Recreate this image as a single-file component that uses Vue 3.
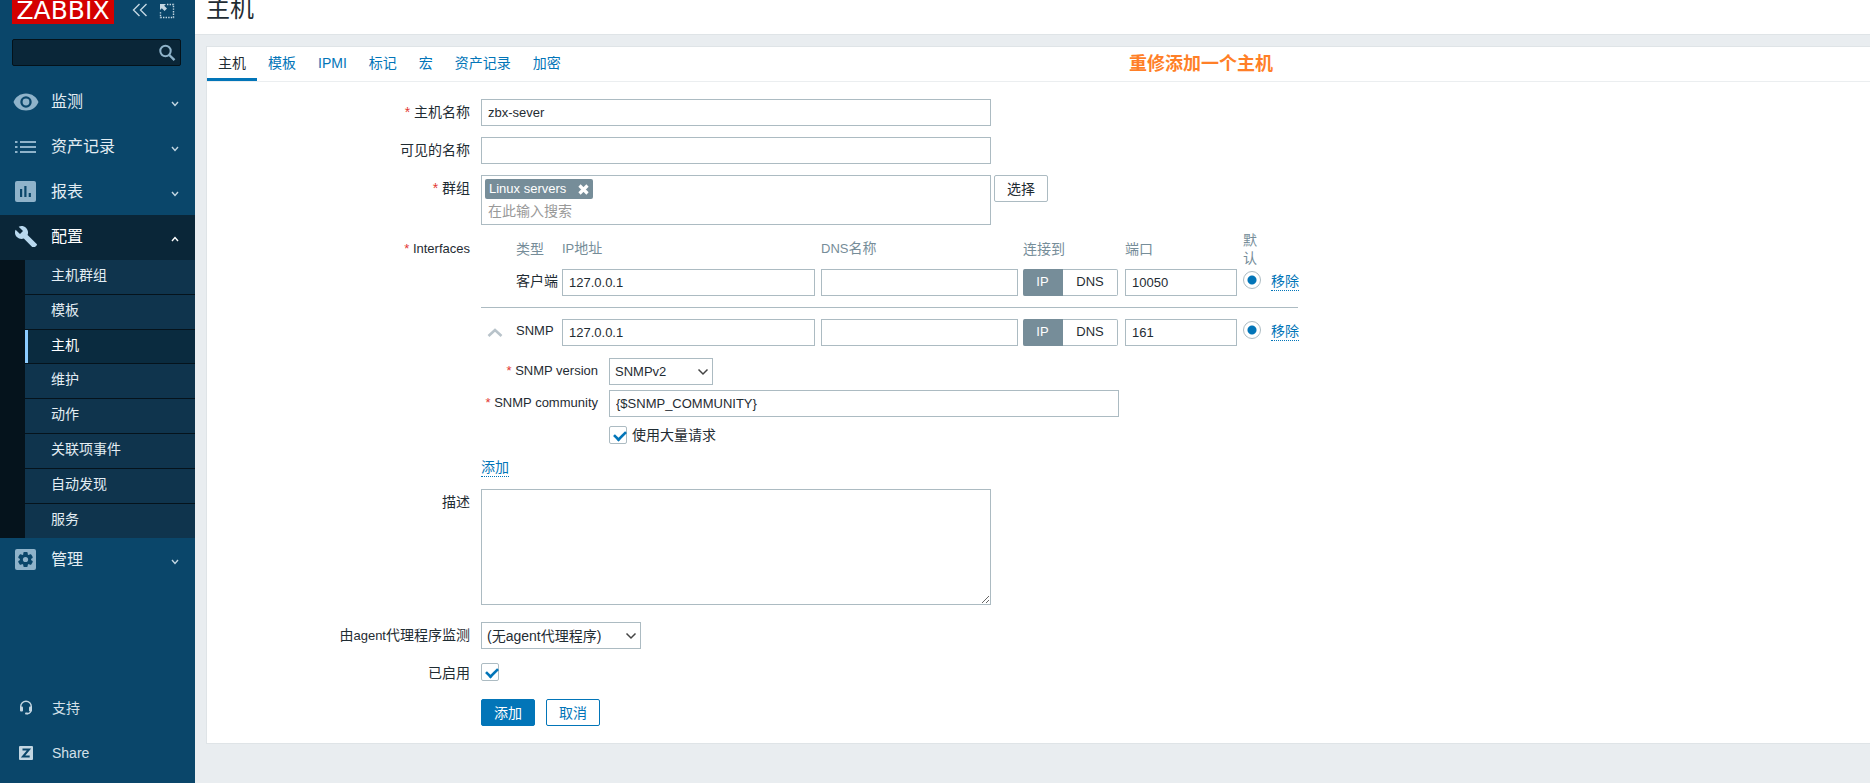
<script setup>
import { ref } from 'vue'

const menuTop = [
  { label: '监测', icon: 'eye' },
  { label: '资产记录', icon: 'list' },
  { label: '报表', icon: 'chart' }
]
const submenu = ['主机群组', '模板', '主机', '维护', '动作', '关联项事件', '自动发现', '服务']
const tabs = ['主机', '模板', 'IPMI', '标记', '宏', '资产记录', '加密']

const hostName = ref('zbx-sever')
const visibleName = ref('')
const interfaces = ref([
  { id: 'agent', type: '客户端', ip: '127.0.0.1', dns: '', port: '10050' },
  { id: 'snmp', type: 'SNMP', ip: '127.0.0.1', dns: '', port: '161' }
])
const community = ref('{$SNMP_COMMUNITY}')
const bulk = ref(true)
const enabled = ref(true)
const description = ref('')
</script>

<template>
  <div class="layout">
    <aside class="sidebar">
      <div class="brand">
        <a href="#" class="logo">ZABBIX</a>
        <button type="button" class="icon-btn compact" aria-label="收起">
          <svg width="16" height="14" viewBox="0 0 16 14"><path d="M7.5 1 1.5 7l6 6M14.5 1l-6 6 6 6" fill="none" stroke="#c3d6e2" stroke-width="1.4" /></svg>
        </button>
        <button type="button" class="icon-btn" aria-label="隐藏">
          <svg width="16" height="16" viewBox="0 0 16 16">
            <path d="M8 1.5h6.500v13h-13V8" fill="none" stroke="#c3d6e2" stroke-width="1.4" stroke-dasharray="1.4 1.2" />
            <path d="M1 1h6L5.200 2.800 8 5.600 5.600 8 2.800 5.200 1 7z" fill="#c3d6e2" />
          </svg>
        </button>
      </div>
      <form class="search" @submit.prevent>
        <input type="text" aria-label="搜索" />
        <button type="submit" class="icon-btn" aria-label="搜索">
          <svg width="18" height="18" viewBox="0 0 18 18"><circle cx="7.500" cy="7" r="5.200" fill="none" stroke="#8fb3ca" stroke-width="2" /><path d="m11.300 11 5.200 5.200" stroke="#8fb3ca" stroke-width="2.400" /></svg>
        </button>
      </form>
      <nav>
        <a v-for="m in menuTop" :key="m.label" href="#" class="menu-item">
          <span class="menu-icon">
            <svg v-if="m.icon === 'eye'" width="26" height="18" viewBox="0 0 26 18"><path fill-rule="evenodd" fill="#8fb3ca" d="M13 .5C7 .5 2.500 4 .5 9c2 5 6.500 8.500 12.500 8.500S23.500 14 25.500 9C23.500 4 19 .5 13 .5zm0 14.200a5.700 5.700 0 1 1 0-11.400 5.700 5.700 0 0 1 0 11.400z" /><circle cx="13" cy="9" r="3.400" fill="#8fb3ca" /></svg>
            <svg v-else-if="m.icon === 'list'" width="22" height="12" viewBox="0 0 22 12"><path fill="#8fb3ca" d="M0 0h2.500v2H0zM5 0h16v2H5zM0 5h2.500v2H0zM5 5h16v2H5zM0 10h2.500v2H0zM5 10h16v2H5z" /></svg>
            <svg v-else width="21" height="21" viewBox="0 0 21 21"><rect width="21" height="21" rx="2" fill="#8fb3ca" /><path fill="#0a466a" d="M5 8h2.200v8H5zM9.300 5h2.200v11H9.300zM13.700 12h2.200v4h-2.200z" /></svg>
          </span>
          <span>{{ m.label }}</span>
          <svg class="caret" width="8" height="6" viewBox="0 0 8 6"><path d="m1 1 3 3.500L7 1" fill="none" stroke="#c3d6e2" stroke-width="1.400" /></svg>
        </a>
        <a href="#" class="menu-item open">
          <span class="menu-icon">
            <svg width="22" height="21" viewBox="1 1.500 22 20"><path fill="#b8d8ee" d="M22.700 19l-9.100-9.100c.9-2.300.4-5-1.500-6.900-2-2-5-2.400-7.400-1.300L9 6 6 9 1.600 4.700C.4 7.100.9 10.100 2.900 12.100c1.900 1.900 4.600 2.400 6.900 1.500l9.100 9.100c.4.4 1 .4 1.400 0l2.300-2.300c.5-.4.5-1.100.1-1.400z" /></svg>
          </span>
          <span>配置</span>
          <svg class="caret" width="8" height="6" viewBox="0 0 8 6"><path d="m1 5 3-3.500L7 5" fill="none" stroke="#fff" stroke-width="1.400" /></svg>
        </a>
        <ul class="submenu">
          <li v-for="s in submenu" :key="s"><a href="#" :class="{ current: s === '主机' }">{{ s }}</a></li>
        </ul>
        <a href="#" class="menu-item">
          <span class="menu-icon">
            <svg width="21" height="21" viewBox="0 0 21 21">
              <rect width="21" height="21" rx="2" fill="#8fb3ca" />
              <g fill="#0a466a"><circle cx="10.500" cy="10.500" r="5.600" /><rect v-for="a in [0, 60, 120]" :key="a" x="8.300" y="3" width="4.400" height="15" rx="1" :transform="`rotate(${a} 10.500 10.500)`" /></g>
              <circle cx="10.500" cy="10.500" r="2.600" fill="#8fb3ca" />
            </svg>
          </span>
          <span>管理</span>
          <svg class="caret" width="8" height="6" viewBox="0 0 8 6"><path d="m1 1 3 3.500L7 1" fill="none" stroke="#c3d6e2" stroke-width="1.400" /></svg>
        </a>
      </nav>
      <nav class="bottom-nav">
        <a href="#" class="menu-item small">
          <span class="menu-icon">
            <svg width="14" height="15" viewBox="0 0 14 15"><path d="M1.700 9V6.500a5.300 5.300 0 0 1 10.600 0V9c0 3-1.500 4.500-4.300 4.800" fill="none" stroke="#c3d6e2" stroke-width="1.400" /><rect x="1" y="6.500" width="3" height="5" rx="1" fill="#c3d6e2" /><rect x="10" y="6.500" width="3" height="5" rx="1" fill="#c3d6e2" /><rect x="6" y="12.500" width="3" height="2" rx="1" fill="#c3d6e2" /></svg>
          </span>
          <span>支持</span>
        </a>
        <a href="#" class="menu-item small">
          <span class="menu-icon">
            <svg width="14" height="14" viewBox="0 0 14 14"><rect width="14" height="14" rx="1" fill="#c3d6e2" /><path d="M3.500 3.500h6.500L4 10.500h6.700" fill="none" stroke="#0a466a" stroke-width="2" /></svg>
          </span>
          <span>Share</span>
        </a>
      </nav>
    </aside>

    <div class="page">
      <header class="page-head"><h1>主机</h1></header>
      <main class="card">
        <nav class="tabs">
          <a v-for="(t, i) in tabs" :key="t" href="#" :class="{ active: i === 0 }">{{ t }}</a>
        </nav>
        <strong class="note">重修添加一个主机</strong>

        <form class="form" @submit.prevent>
          <label class="label req" for="host">主机名称</label>
          <div class="field"><input id="host" v-model="hostName" class="box wide" type="text" /></div>

          <label class="label" for="visible">可见的名称</label>
          <div class="field"><input id="visible" v-model="visibleName" class="box wide" type="text" /></div>

          <label class="label req" for="groups">群组</label>
          <div class="field groups">
            <div class="multi wide">
              <span class="tag">Linux servers
                <button type="button" class="icon-btn" aria-label="移除 Linux servers"><svg width="11" height="11" viewBox="0 0 11 11"><path d="m1.500 1.500 8 8m0-8-8 8" stroke="#fff" stroke-width="3.200" /></svg></button>
              </span>
              <input id="groups" type="text" placeholder="在此输入搜索" />
            </div>
            <button type="button" class="btn plain">选择</button>
          </div>

          <span class="label req iface-label lat">Interfaces</span>
          <div class="field iface">
            <table>
              <colgroup>
                <col class="c-toggle" /><col class="c-type" /><col class="c-ip" /><col class="c-dns" /><col class="c-conn" /><col class="c-port" /><col class="c-def" /><col class="c-act" />
              </colgroup>
              <thead>
                <tr><th></th><th>类型</th><th><span class="lat">IP</span>地址</th><th><span class="lat">DNS</span>名称</th><th>连接到</th><th>端口</th><th><span class="default-head">默认</span></th><th></th></tr>
              </thead>
              <tbody>
                <tr v-for="(r, i) in interfaces" :key="r.id" :class="{ ruled: i > 0 }">
                  <td class="fold">
                    <button v-if="i > 0" type="button" class="icon-btn" aria-label="折叠"><svg width="16" height="9" viewBox="0 0 16 9"><path d="m1.500 8 6.500-6 6.500 6" fill="none" stroke="#b8c3ca" stroke-width="2.600" /></svg></button>
                  </td>
                  <td><span class="type" :class="{ lat: i > 0 }">{{ r.type }}</span></td>
                  <td><input v-model="r.ip" class="box ip" type="text" aria-label="IP地址" /></td>
                  <td><input v-model="r.dns" class="box dns" type="text" aria-label="DNS名称" /></td>
                  <td>
                    <div class="switch"><button type="button" class="on">IP</button><button type="button">DNS</button></div>
                  </td>
                  <td><input v-model="r.port" class="box port" type="text" aria-label="端口" /></td>
                  <td><input class="radio" type="radio" :name="r.id" aria-label="默认" checked /></td>
                  <td><a href="#" class="link">移除</a></td>
                </tr>
                <tr>
                  <td colspan="8" class="details-cell">
                    <div class="details">
                      <label class="label req lat" for="ver">SNMP version</label>
                      <div class="select ver">
                        <select id="ver"><option>SNMPv2</option></select>
                        <svg width="12" height="8" viewBox="0 0 12 8"><path d="m1.500 1.500 4.500 4.500 4.500-4.500" fill="none" stroke="#444" stroke-width="1.500" /></svg>
                      </div>
                      <label class="label req lat" for="comm">SNMP community</label>
                      <input id="comm" v-model="community" class="box wide" type="text" />
                      <span></span>
                      <label class="check"><input v-model="bulk" class="checkbox" type="checkbox" /><span>使用大量请求</span></label>
                    </div>
                  </td>
                </tr>
              </tbody>
            </table>
            <a href="#" class="link add">添加</a>
          </div>

          <label class="label" for="desc">描述</label>
          <div class="field desc"><textarea id="desc" v-model="description" class="wide"></textarea></div>

          <label class="label" for="proxy">由<span class="lat">agent</span>代理程序监测</label>
          <div class="field proxy">
            <div class="select">
              <select id="proxy"><option>(无agent代理程序)</option></select>
              <svg width="12" height="8" viewBox="0 0 12 8"><path d="m1.500 1.500 4.500 4.500 4.500-4.500" fill="none" stroke="#444" stroke-width="1.500" /></svg>
            </div>
          </div>

          <label class="label" for="enabled">已启用</label>
          <div class="field enabled"><input id="enabled" v-model="enabled" class="checkbox" type="checkbox" /></div>

          <div class="actions">
            <button type="submit" class="btn primary">添加</button>
            <button type="button" class="btn outline">取消</button>
          </div>
        </form>
      </main>
    </div>
  </div>
</template>

<style>
body {
  background: #e9edf0;
}
</style>

<style scoped>
.layout,
.layout * {
  box-sizing: border-box;
}
.layout {
  display: flex;
  min-height: 100vh;
  font-family: "Liberation Sans", "Noto Sans CJK SC", sans-serif;
  font-size: 14px;
  line-height: 18px;
  color: #1f2c33;
}
.layout input,
.layout select,
.layout textarea,
.layout button {
  font-family: inherit;
  font-size: 14px;
  color: inherit;
  margin: 0;
}
a {
  text-decoration: none;
}
svg {
  display: block;
}
.icon-btn {
  display: inline-flex;
  padding: 0;
  border: 0;
  background: none;
}
.layout .lat {
  font-size: 13px;
}

/* sidebar */
.sidebar {
  flex: none;
  display: flex;
  flex-direction: column;
  width: 195px;
  padding-bottom: 8px;
  background: #0a466a;
}
.brand {
  display: flex;
  align-items: flex-start;
  height: 39px;
  padding-left: 12px;
}
.layout .brand .icon-btn {
  margin: 3px 0 0 11px;
}
.layout .brand .icon-btn.compact {
  margin-left: 18px;
}
.logo {
  width: 102px;
  height: 24px;
  background: #d40000;
  color: #fff;
  font: 25px/22px "DejaVu Sans", sans-serif;
  text-align: center;
}
.search {
  display: flex;
  align-items: center;
  margin: 0 14px 14px 12px;
  height: 27px;
  padding-right: 4px;
  border: 1px solid #04121a;
  border-radius: 2px;
  background: #0a2638;
}
.search input {
  flex: 1;
  min-width: 0;
  border: 0;
  background: none;
}
.menu-item {
  display: flex;
  align-items: center;
  height: 45px;
  padding: 0 16px 2px 0;
  color: #e3edf3;
  font-size: 16px;
}
.menu-item.open {
  background: #0a2638;
  color: #fff;
}
.menu-icon {
  display: flex;
  justify-content: center;
  width: 51px;
}
.caret {
  margin: 4px 0 0 auto;
}
.submenu {
  margin: 0;
  padding: 0 0 0 25px;
  list-style: none;
  background: #05131c;
}
.submenu a {
  display: block;
  height: 34px;
  padding: 6px 0 0 26px;
  background: #0f344d;
  color: #e3edf3;
}
.submenu li + li {
  border-top: 1px solid #05131c;
}
.submenu a.current {
  height: 33px;
  padding-left: 23px;
  border-left: 3px solid #8bcbff;
  background: #0a2b3f;
  box-shadow: 0 -1px #05131c;
  color: #fff;
}
.bottom-nav {
  margin-top: auto;
}
.menu-item.small {
  gap: 1px;
  padding-bottom: 0;
  color: #d3e0e9;
  font-size: 14px;
}

/* page */
.page {
  flex: 1;
  min-width: 0;
}
.page-head {
  height: 35px;
  padding-left: 11px;
  border-bottom: 1px solid #dfe4e7;
  background: #fff;
}
h1 {
  margin: 0;
  font-size: 24px;
  line-height: 17px;
  font-weight: 400;
}
.card {
  position: relative;
  margin: 11px 0 0 11px;
  border: 1px solid #dfe4e7;
  border-right: 0;
  background: #fff;
}
.tabs {
  display: flex;
  height: 35px;
  border-bottom: 1px solid #ebeef0;
}
.tabs a {
  padding: 7px 11px 0;
  height: 34px;
  color: #0275b8;
}
.tabs a.active {
  border-bottom: 3px solid #0275b8;
  color: #1f2c33;
}
.note {
  position: absolute;
  left: 922px;
  top: 8px;
  font-size: 18px;
  color: #ff7f27;
}

/* form */
.form {
  display: grid;
  grid-template-columns: 263px minmax(0, 1fr);
  column-gap: 11px;
  row-gap: 11px;
  padding: 17px 0;
}
.label {
  padding-top: 4px;
  text-align: right;
}
.req::before {
  content: "* ";
  color: #e33734;
}
.box,
.multi,
.select select,
textarea {
  border: 1px solid #acbbc2;
  border-radius: 0;
  background: #fff;
}
.box {
  display: block;
  height: 27px;
  padding: 0 6px;
}
.layout .box {
  font-size: 13px;
}
.wide {
  width: 510px;
}
.groups {
  display: flex;
  align-items: flex-start;
  gap: 3px;
}
.multi {
  height: 50px;
  padding: 3px;
}
.tag {
  display: flex;
  align-items: center;
  justify-content: space-between;
  width: 108px;
  height: 20px;
  padding: 0 4px;
  border-radius: 2px;
  background: #768d99;
  color: #fff;
  font-size: 13px;
}
.multi input {
  display: block;
  width: 100%;
  height: 24px;
  padding: 0 3px;
  border: 0;
  outline: 0;
}
.multi input::placeholder {
  color: #999;
}
.btn {
  width: 54px;
  height: 27px;
  padding: 0 0 2px;
  border: 1px solid #acbbc2;
  border-radius: 2px;
  background: #fff;
}
.layout .btn.primary {
  border-color: #0275b8;
  background: #0275b8;
  color: #fff;
}
.layout .btn.outline {
  border-color: #0275b8;
  color: #0275b8;
}

/* interfaces */
.iface-label {
  padding-top: 4px;
}
.iface {
  margin-top: -6px;
}
table {
  width: 817px;
  table-layout: fixed;
  border-collapse: collapse;
}
.c-toggle { width: 35px; }
.c-type { width: 46px; }
.c-ip { width: 259px; }
.c-dns { width: 202px; }
.c-conn { width: 102px; }
.c-port { width: 118px; }
.c-def { width: 28px; }
.c-act { width: 27px; }
th {
  height: 39px;
  padding: 0 0 2px;
  color: #768d99;
  font-weight: 400;
  text-align: left;
  white-space: nowrap;
}
.default-head {
  display: block;
  width: 14px;
  white-space: normal;
}
td {
  padding: 0 0 11px;
  vertical-align: top;
}
.ruled td {
  padding: 11px 0 12px;
  border-top: 1px solid #acbbc2;
}
.layout .fold button {
  margin: 9px 0 0 6px;
}
.type {
  display: block;
  padding-top: 3px;
  white-space: nowrap;
}
.ip { width: 253px; }
.dns { width: 197px; }
.port { width: 112px; }
.switch {
  display: flex;
  width: 95px;
  height: 27px;
}
.switch button {
  flex: 1 1 55px;
  padding: 0 0 2px;
  border: 1px solid #acbbc2;
  border-left: 0;
  border-radius: 0 2px 2px 0;
  background: #fff;
}
.layout .switch button {
  font-size: 13px;
}
.layout .switch .on {
  flex: 0 0 40px;
  border-color: #768d99;
  border-radius: 2px 0 0 2px;
  background: #768d99;
  color: #fff;
}
.layout .radio,
.layout .checkbox {
  appearance: none;
  display: block;
  flex: none;
  width: 18px;
  height: 18px;
  border: 1px solid #acbbc2;
  background: #fff;
}
.layout .radio {
  border-radius: 50%;
}
.layout td .radio {
  margin-top: 2px;
}
.layout .radio:checked {
  background: radial-gradient(circle, #0275b8 4px, #fff 5px);
}
.layout .checkbox {
  border-radius: 2px;
}
.checkbox:checked::before {
  content: "";
  display: block;
  width: 11px;
  height: 6px;
  margin: 3px 0 0 3px;
  border: solid #0275b8;
  border-width: 0 0 3px 3px;
  transform: rotate(-45deg) scale(0.85);
}
.link {
  display: inline-block;
  border-bottom: 1px dotted #0275b8;
  color: #0275b8;
  white-space: nowrap;
}
td .link {
  margin-top: 3px;
}
.details-cell {
  padding-bottom: 14px;
}
.details {
  display: grid;
  grid-template-columns: 117px 1fr;
  column-gap: 11px;
  row-gap: 5px;
  align-items: start;
}
.details .label {
  white-space: nowrap;
}
.check {
  display: flex;
  gap: 5px;
  margin-top: 4px;
}
.select {
  display: grid;
  align-items: center;
  width: 160px;
}
.select.ver {
  width: 104px;
}
.select select,
.select svg {
  grid-area: 1 / 1;
}
.select svg {
  justify-self: end;
  margin-right: 4px;
  pointer-events: none;
}
.select select {
  appearance: none;
  height: 27px;
  padding: 0 5px;
}
.layout .select select {
  font-size: 13px;
}
.layout .select #proxy {
  font-size: 14px;
}
.add {
  display: table;
}
textarea {
  display: block;
  height: 116px;
  resize: both;
}
.iface {
  margin-bottom: 1px;
}
.desc {
  margin-bottom: 6px;
}
.enabled {
  margin-top: 3px;
}
.actions {
  grid-column: 2;
  display: flex;
  gap: 11px;
  margin-top: 6px;
}
</style>
